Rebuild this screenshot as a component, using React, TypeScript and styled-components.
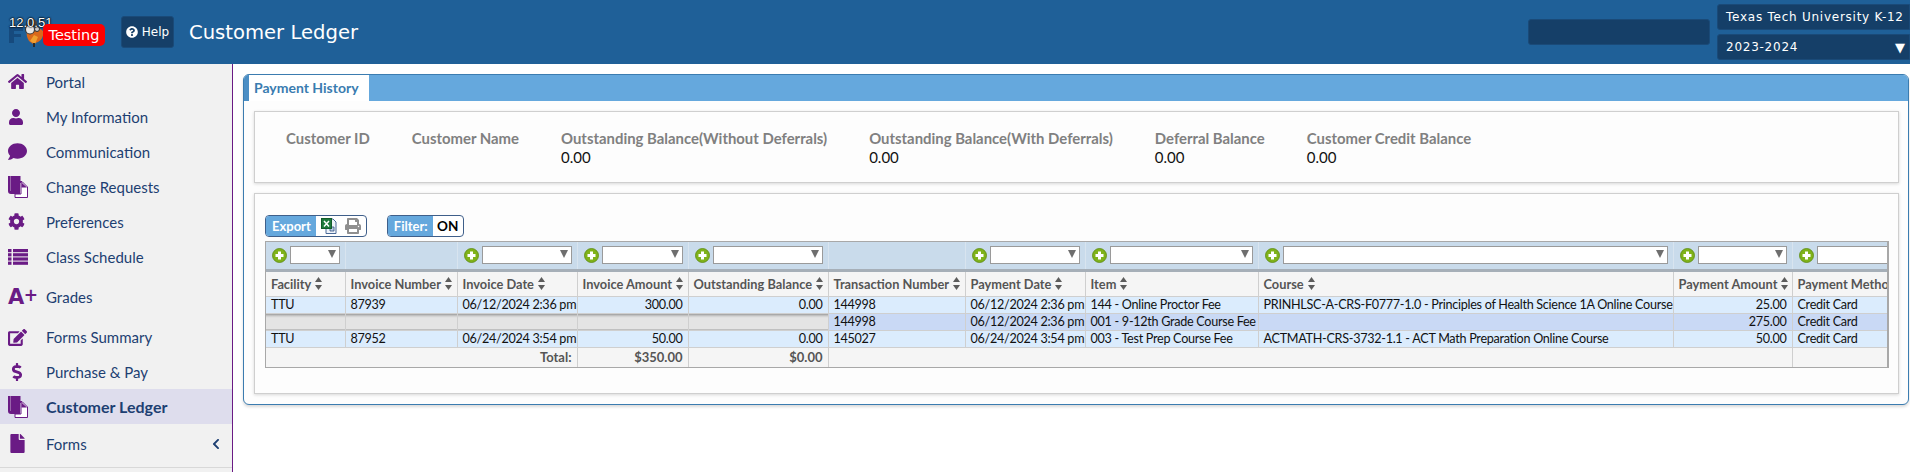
import styled, { createGlobalStyle } from "styled-components";
import {
  FaHome,
  FaUser,
  FaComment,
  FaCog,
  FaEdit,
  FaDollarSign,
  FaFile,
  FaChevronLeft,
  FaQuestionCircle,
  FaPrint,
} from "react-icons/fa";

const PURPLE = "#6a1b85";

const columns = [
  { title: "Facility", width: 79, filter: true },
  { title: "Invoice Number", width: 112, filter: false },
  { title: "Invoice Date", width: 120, filter: true },
  { title: "Invoice Amount", width: 111, filter: true, right: true },
  { title: "Outstanding Balance", width: 140, filter: true, right: true },
  { title: "Transaction Number", width: 137, filter: false },
  { title: "Payment Date", width: 120, filter: true },
  { title: "Item", width: 173, filter: true },
  { title: "Course", width: 415, filter: true },
  { title: "Payment Amount", width: 119, filter: true, right: true },
  { title: "Payment Method", width: 130, filter: true },
];

const rows = [
  {
    sub: false,
    cells: ["TTU", "87939", "06/12/2024 2:36 pm", "300.00", "0.00", "144998", "06/12/2024 2:36 pm", "144 - Online Proctor Fee", "PRINHLSC-A-CRS-F0777-1.0 - Principles of Health Science 1A Online Course", "25.00", "Credit Card"],
  },
  {
    sub: true,
    cells: ["", "", "", "", "", "144998", "06/12/2024 2:36 pm", "001 - 9-12th Grade Course Fee", "", "275.00", "Credit Card"],
  },
  {
    sub: false,
    cells: ["TTU", "87952", "06/24/2024 3:54 pm", "50.00", "0.00", "145027", "06/24/2024 3:54 pm", "003 - Test Prep Course Fee", "ACTMATH-CRS-3732-1.1 - ACT Math Preparation Online Course", "50.00", "Credit Card"],
  },
];

const summary = [
  { label: "Customer ID", value: "" },
  { label: "Customer Name", value: "" },
  { label: "Outstanding Balance(Without Deferrals)", value: "0.00" },
  { label: "Outstanding Balance(With Deferrals)", value: "0.00" },
  { label: "Deferral Balance", value: "0.00" },
  { label: "Customer Credit Balance", value: "0.00" },
];

function DocsIcon() {
  return (
    <svg width="20" height="23" viewBox="0 0 20 23">
      <path d="M0 1h12.5v5H14v2h-2v11H3a3 3 0 0 1-3-3z" fill={PURPLE} />
      <path d="M2 1v15h1V1z" fill="#f1f1f1" opacity="0.35" />
      <path d="M13 7h1.5l5 5v10.5H7V19h6z" fill="#fff" stroke={PURPLE} strokeWidth="1" />
      <path d="M13.5 7.5v5h5.5z" fill={PURPLE} />
    </svg>
  );
}

function ListIcon() {
  return (
    <svg width="20" height="16" viewBox="0 0 20 16" fill={PURPLE}>
      <rect x="0" y="0" width="3.5" height="3.2" />
      <rect x="5" y="0" width="15" height="3.2" />
      <rect x="0" y="4.2" width="3.5" height="3.2" />
      <rect x="5" y="4.2" width="15" height="3.2" />
      <rect x="0" y="8.4" width="3.5" height="3.2" />
      <rect x="5" y="8.4" width="15" height="3.2" />
      <rect x="0" y="12.6" width="3.5" height="3.2" />
      <rect x="5" y="12.6" width="15" height="3.2" />
    </svg>
  );
}

function Logo() {
  return (
    <svg width="50" height="34" viewBox="0 0 50 34">
      <path d="M9 14h14v4h-9v3h7v3h-7v6H9z" fill="#164a7d" />
      <path d="M27 18c4-4 13-4 16 0 1 4-1 9-5 11l-5 2-4-3c-2-3-3-7-2-10z" fill="#d9691c" />
      <path d="M30 28l4-6 4 2-3 7z" fill="#f0a030" />
      <path d="M26 9c2-4 9-4 11 0v5H26z" fill="#4a4a4a" />
      <circle cx="30" cy="16.5" r="4.5" fill="#e8e8e8" stroke="#333" strokeWidth="1.1" />
      <circle cx="37" cy="16" r="2.5" fill="#cfcfcf" stroke="#333" strokeWidth="1" />
      <path d="M33 30h2v4h-2z" fill="#2a2a2a" />
    </svg>
  );
}

function SortIcon() {
  return (
    <SortSvg width="7" height="13" viewBox="0 0 7 13" fill="#5c5c5c">
      <path d="M3.5 0L7 5H0z" />
      <path d="M3.5 13L0 8h7z" />
    </SortSvg>
  );
}

function AddIcon() {
  return (
    <AddSvg width="15" height="15" viewBox="0 0 15 15">
      <circle cx="7.5" cy="7.5" r="7" fill="#7fb219" stroke="#5c8a10" strokeWidth="0.8" />
      <path d="M6 3.5h3V6h2.5v3H9v2.5H6V9H3.5V6H6z" fill="#fff" />
    </AddSvg>
  );
}

function ExcelIcon() {
  return (
    <svg width="16" height="16" viewBox="0 0 16 16">
      <path d="M5 1h7l3 3v11.5H5z" fill="#eef3fa" stroke="#4a6a98" strokeWidth="1" />
      <path d="M9 9h4v4H9z" fill="#b9cde6" stroke="#35527f" strokeWidth="0.8" />
      <rect x="0.5" y="0.5" width="10" height="10" fill="#1e7a3c" stroke="#145c2b" />
      <path d="M3 3l5 5.5M8 3L3 8.5" stroke="#fff" strokeWidth="1.5" />
    </svg>
  );
}

function App() {
  return (
    <>
      <GlobalStyle />
      <Page>
        <Header>
          <LogoBox>
            <Logo />
            <Version>12.0.51</Version>
            <TestingBadge>Testing</TestingBadge>
          </LogoBox>
          <HelpButton>
            <FaQuestionCircle size={12} />
            Help
          </HelpButton>
          <Title>Customer Ledger</Title>
          <HeaderRight>
            <SearchBox />
            <Selectors>
              <DarkSelect>Texas Tech University K-12</DarkSelect>
              <DarkSelect>
                2023-2024
                <Caret>▼</Caret>
              </DarkSelect>
            </Selectors>
          </HeaderRight>
        </Header>
        <Body>
          <Sidebar>
            <NavItem $height={35}><NavIcon><FaHome size={19} /></NavIcon>Portal</NavItem>
            <NavItem $height={35}><NavIcon><FaUser size={16} /></NavIcon>My Information</NavItem>
            <NavItem $height={35}><NavIcon><FaComment size={19} /></NavIcon>Communication</NavItem>
            <NavItem $height={35}><NavIcon><DocsIcon /></NavIcon>Change Requests</NavItem>
            <NavItem $height={35}><NavIcon><FaCog size={17} /></NavIcon>Preferences</NavItem>
            <NavItem $height={35}><NavIcon><ListIcon /></NavIcon>Class Schedule</NavItem>
            <NavItem $height={46}><NavIcon><GradeMark>A<GradePlus>+</GradePlus></GradeMark></NavIcon>Grades</NavItem>
            <NavItem $height={34}><NavIcon><FaEdit size={19} /></NavIcon>Forms Summary</NavItem>
            <NavItem $height={35}><NavIcon><FaDollarSign size={18} /></NavIcon>Purchase &amp; Pay</NavItem>
            <NavItem $height={35} $active><NavIcon><DocsIcon /></NavIcon>Customer Ledger</NavItem>
            <NavItem $height={39}>
              <NavIcon><FaFile size={19} /></NavIcon>
              Forms
              <Chevron><FaChevronLeft size={12} /></Chevron>
            </NavItem>
            <NavDivider />
          </Sidebar>
          <Main>
            <Panel>
              <TabBar>
                <Tab>Payment History</Tab>
              </TabBar>
              <InfoBox>
                {summary.map((s) => (
                  <InfoItem key={s.label}>
                    <InfoLabel>{s.label}</InfoLabel>
                    <InfoValue>{s.value}</InfoValue>
                  </InfoItem>
                ))}
              </InfoBox>
              <TableBox>
                <Toolbar>
                  <ToolGroup>
                    <ToolLabel>Export</ToolLabel>
                    <ToolIcons>
                      <ExcelIcon />
                      <FaPrint size={16} color="#8f8f8f" />
                    </ToolIcons>
                  </ToolGroup>
                  <ToolGroup>
                    <ToolLabel>Filter:</ToolLabel>
                    <FilterState>ON</FilterState>
                  </ToolGroup>
                </Toolbar>
                <TableFrame>
                  <Table>
                    <colgroup>
                      {columns.map((c) => (
                        <Col key={c.title} $width={c.width} />
                      ))}
                    </colgroup>
                    <thead>
                      <tr>
                        {columns.map((c) => (
                          <FilterCell key={c.title}>
                            {c.filter && (
                              <FilterWrap>
                                <AddIcon />
                                <FilterSelect />
                              </FilterWrap>
                            )}
                          </FilterCell>
                        ))}
                      </tr>
                      <tr>
                        {columns.map((c) => (
                          <HeadCell key={c.title}>
                            <HeadInner>
                              <HeadText>{c.title}</HeadText>
                              <SortIcon />
                            </HeadInner>
                          </HeadCell>
                        ))}
                      </tr>
                    </thead>
                    <tbody>
                      {rows.map((row, i) => (
                        <tr key={i}>
                          {row.cells.map((cell, j) => (
                            <DataCell
                              key={j}
                              $right={columns[j].right}
                              $tone={row.sub ? (j < 5 ? "blank" : "sub") : "main"}
                            >
                              {cell}
                            </DataCell>
                          ))}
                        </tr>
                      ))}
                      <tr>
                        <TotalCell colSpan={3} $right>Total:</TotalCell>
                        <TotalCell $right>$350.00</TotalCell>
                        <TotalCell $right>$0.00</TotalCell>
                        <TotalCell colSpan={5} />
                        <TotalCell />
                      </tr>
                    </tbody>
                  </Table>
                </TableFrame>
              </TableBox>
            </Panel>
          </Main>
        </Body>
      </Page>
    </>
  );
}

const GlobalStyle = createGlobalStyle`
  html, body {
    margin: 0;
    padding: 0;
    background: #fff;
    font-family: Lato, "Liberation Sans", sans-serif;
  }
  * {
    box-sizing: border-box;
  }
`;

const Page = styled.div`
  width: 1910px;
  height: 472px;
  overflow: hidden;
  display: flex;
  flex-direction: column;
`;

const Header = styled.header`
  flex: none;
  height: 64px;
  background: #1f6098;
  display: flex;
  align-items: center;
  color: #fff;
  font-family: "DejaVu Sans", Verdana, sans-serif;
`;

const LogoBox = styled.div`
  position: relative;
  width: 121px;
  height: 64px;
  flex: none;
  padding: 13px 0 0 0;
`;

const Version = styled.span`
  position: absolute;
  left: 9px;
  top: 15px;
  font-family: "Liberation Sans", Arial, sans-serif;
  font-size: 13px;
  line-height: 15px;
  color: #fff;
  text-shadow: 0 0 1px #000, 0 0 2px #000, 0 0 2px #000;
`;

const TestingBadge = styled.span`
  position: absolute;
  left: 43px;
  top: 24px;
  width: 62px;
  height: 22px;
  background: #fe0000;
  border-radius: 5px;
  font-size: 14.5px;
  line-height: 22px;
  text-align: center;
`;

const HelpButton = styled.div`
  width: 53px;
  height: 32px;
  background: #153f68;
  border: 1px solid #1a4a78;
  border-radius: 3px;
  display: flex;
  align-items: center;
  justify-content: center;
  gap: 4px;
  font-size: 12px;
`;

const Title = styled.h1`
  margin: 0 0 0 15px;
  font-size: 19.6px;
  font-weight: 400;
  white-space: nowrap;
`;

const HeaderRight = styled.div`
  margin-left: auto;
  display: flex;
  align-items: center;
  gap: 7px;
`;

const SearchBox = styled.div`
  width: 182px;
  height: 26px;
  background: #153f68;
  border: 1px solid #1a4a78;
  border-radius: 3px;
`;

const Selectors = styled.div`
  display: flex;
  flex-direction: column;
  gap: 4px;
`;

const DarkSelect = styled.div`
  width: 193px;
  height: 26px;
  padding: 0 3px 0 8px;
  background: #153f68;
  border: 1px solid #1a4a78;
  border-radius: 3px 0 0 3px;
  display: flex;
  align-items: center;
  justify-content: space-between;
  font-size: 12px;
  letter-spacing: 0.75px;
  white-space: nowrap;
`;

const Caret = styled.span`
  font-size: 13px;
  margin-right: 1px;
  letter-spacing: 0;
`;

const Body = styled.div`
  flex: 1;
  display: flex;
  min-height: 0;
`;

const Sidebar = styled.nav`
  flex: none;
  width: 233px;
  background: #f1f1f1;
  border-right: 1px solid ${PURPLE};
`;

const NavItem = styled.div<{ $height: number; $active?: boolean }>`
  height: ${(p) => p.$height}px;
  display: flex;
  align-items: center;
  padding-left: 8px;
  font-size: ${(p) => (p.$active ? 16 : 15)}px;
  color: #1d3f72;
  font-weight: ${(p) => (p.$active ? 700 : 400)};
  background: ${(p) => (p.$active ? "#dedded" : "transparent")};
`;

const NavIcon = styled.span`
  flex: none;
  width: 38px;
  display: flex;
  align-items: center;
  color: ${PURPLE};
`;

const GradeMark = styled.span`
  font-family: "DejaVu Sans", sans-serif;
  font-size: 21px;
  font-weight: 700;
  letter-spacing: -0.5px;
  color: ${PURPLE};
`;

const GradePlus = styled.span`
  display: inline-block;
  font-size: 17px;
  transform: translateY(-3px);
`;

const Chevron = styled.span`
  margin-left: auto;
  margin-right: 10px;
  display: flex;
  color: #1d3f72;
`;

const NavDivider = styled.div`
  margin-top: 4px;
  height: 1px;
  background: #d8d8d8;
`;

const Main = styled.main`
  flex: 1;
  min-width: 0;
  padding: 10px 1px 0 10px;
`;

const Panel = styled.section`
  height: 331px;
  border: 1px solid #3b7cb0;
  border-radius: 6px;
  background: #fdfdfd;
  box-shadow: 0 2px 3px rgba(0, 0, 0, 0.15);
  overflow: hidden;
`;

const TabBar = styled.div`
  height: 26px;
  background: #65a8dd;
  padding-left: 5px;
  box-shadow: inset 5px 0 0 #4b8ec4;
`;

const Tab = styled.div`
  width: 120px;
  height: 26px;
  background: #fff;
  color: #3a7cb0;
  font-size: 14px;
  font-weight: 700;
  line-height: 25px;
  padding-left: 5px;
  white-space: nowrap;
`;

const InfoBox = styled.div`
  margin: 10px 9px 0 10px;
  height: 72px;
  padding: 17px 0 0 31px;
  border: 1px solid #cfcfcf;
  background: #fdfdfd;
  box-shadow: 0 1px 3px rgba(0, 0, 0, 0.15);
  display: flex;
  gap: 42px;
`;

const InfoItem = styled.div`
  display: flex;
  flex-direction: column;
`;

const InfoLabel = styled.span`
  font-size: 14.9px;
  line-height: 19px;
  font-weight: 700;
  color: #808080;
  white-space: nowrap;
`;

const InfoValue = styled.span`
  font-size: 15px;
  line-height: 18px;
  color: #111;
`;

const TableBox = styled.div`
  margin: 10px 9px 0 10px;
  height: 201px;
  padding: 21px 10px 0;
  border: 1px solid #cfcfcf;
  box-shadow: 0 1px 3px rgba(0, 0, 0, 0.15);
`;

const Toolbar = styled.div`
  display: flex;
  gap: 20px;
  height: 26px;
`;

const ToolGroup = styled.div`
  height: 22px;
  border: 1px solid #3f5f8a;
  border-radius: 4px;
  display: flex;
  overflow: hidden;
  background: #fff;
`;

const ToolLabel = styled.span`
  padding: 0 5px 0 6px;
  background: #65a8dd;
  color: #fff;
  font-size: 13px;
  font-weight: 700;
  line-height: 20px;
`;

const ToolIcons = styled.span`
  display: flex;
  align-items: center;
  gap: 8px;
  padding: 0 5px;
`;

const FilterState = styled.span`
  width: 30px;
  text-align: center;
  font-size: 13.5px;
  font-weight: 700;
  line-height: 20px;
  color: #000;
`;

const TableFrame = styled.div`
  width: 1624px;
  overflow: hidden;
  border: 1px solid #a8a8a8;
  border-right-width: 2px;
`;

const Table = styled.table`
  table-layout: fixed;
  width: 1646px;
  border-collapse: collapse;
  font-size: 12.6px;
  color: #111;
`;

const Col = styled.col<{ $width: number }>`
  width: ${(p) => p.$width}px;
`;

const FilterCell = styled.th`
  height: 28px;
  padding: 0 5px 0 6px;
  background: #c9dbeb;
  border-left: 1px solid #d8e4ef;
  border-bottom: 3px solid #a6afb8;
  &:first-child {
    border-left: 0;
  }
`;

const FilterWrap = styled.div`
  display: flex;
  align-items: center;
  gap: 3px;
`;

const AddSvg = styled.svg`
  flex: none;
`;

const FilterSelect = styled.div`
  position: relative;
  flex: 1;
  height: 18px;
  background: #fff;
  border: 1px solid #9a9a9a;
  &::after {
    content: "";
    position: absolute;
    right: 3px;
    top: 3px;
    border-left: 4px solid transparent;
    border-right: 4px solid transparent;
    border-top: 8px solid #6e6e6e;
  }
`;

const HeadCell = styled.th`
  height: 26px;
  padding: 0 5px;
  background: #f5f5f5;
  border-left: 1px solid #cfcfcf;
  border-bottom: 1px solid #cfcfcf;
  font-size: 12.8px;
  color: #555;
  font-weight: 700;
  &:first-child {
    border-left: 0;
  }
`;

const HeadInner = styled.div`
  display: flex;
  align-items: center;
  gap: 4px;
  white-space: nowrap;
`;

const HeadText = styled.span`
  color: #555;
`;

const SortSvg = styled.svg`
  flex: none;
`;

const toneColor = { main: "#dbecfd", sub: "#c9d9f5", blank: "#e4e4e4" };

const DataCell = styled.td<{ $right?: boolean; $tone: "main" | "sub" | "blank" }>`
  height: 17px;
  padding: 0 5px;
  line-height: 16px;
  letter-spacing: -0.28px;
  background: ${(p) =>
    p.$tone === "blank"
      ? "linear-gradient(#8e8e8e 0, #c4c4c4 2px, #e4e4e4 4px)"
      : toneColor[p.$tone]};
  text-align: ${(p) => (p.$right ? "right" : "left")};
  border-left: 1px solid #cfcfcf;
  border-bottom: 1px solid #cfcfcf;
  white-space: nowrap;
  overflow: hidden;
  &:first-child {
    border-left: 0;
  }
`;

const TotalCell = styled.td<{ $right?: boolean }>`
  height: 20px;
  padding: 0 5px;
  background: #f5f5f5;
  color: #555;
  font-size: 13px;
  font-weight: 700;
  text-align: ${(p) => (p.$right ? "right" : "left")};
  border-left: 1px solid #cfcfcf;
  border-top: 1px solid #aaa;
  &:first-child {
    border-left: 0;
  }
`;

export default App;
